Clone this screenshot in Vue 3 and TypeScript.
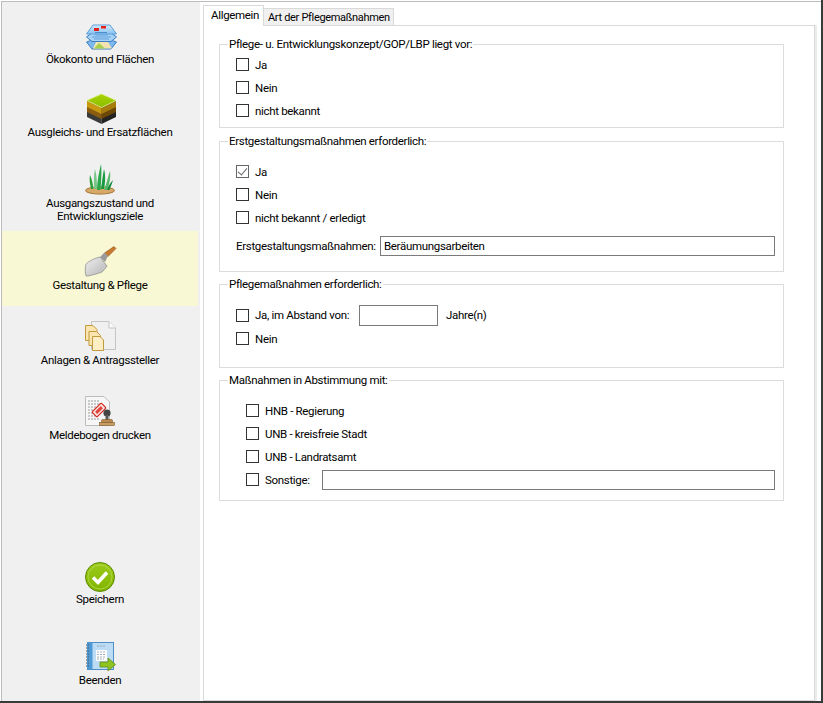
<template>
  <div class="window">
    <aside class="sidebar">
      <nav class="nav">
        <a class="nav-item first">
          <svg class="icon" viewBox="0 0 32 32">
            <polygon points="2.5,22 8,20 27,20 32.5,22 27,29 8,29" fill="#7db9ee" stroke="#3c7fc0" />
            <polygon points="9,28.5 12,22 24,22 28,28.5" fill="#f3e3b0" />
            <polygon points="10,28.5 15,23 21,28.5" fill="#a8d04c" />
            <polygon points="2.5,17 8,13 27,13 32.5,17 27,21.5 8,21.5" fill="#a8d3f7" stroke="#3c7fc0" />
            <path d="M8 17h19M11 15h13M10 19h15" stroke="#4f94d6" fill="none" stroke-width="0.8" />
            <polygon points="2.5,14 9,5 26,5 32.5,14" fill="url(#layerBlue)" stroke="#5d9fdb" />
            <rect x="10" y="8" width="5" height="3" fill="#e3201b" />
            <rect x="17" y="6" width="5" height="2.5" fill="#e3201b" />
            <path d="M11 12.5h12" stroke="#3c7fc0" stroke-width="0.8" />
            <defs>
              <linearGradient id="layerBlue" x1="0" y1="0" x2="0" y2="1">
                <stop offset="0" stop-color="#d6ecfc" />
                <stop offset="1" stop-color="#86c1f1" />
              </linearGradient>
            </defs>
          </svg>
          <span class="nav-label">Ökokonto und Flächen</span>
        </a>

        <a class="nav-item second">
          <svg class="icon" viewBox="0 0 32 32">
            <polygon points="3,8 17.5,15 17.5,31 3,24" fill="#3a3a38" />
            <polygon points="32,8 17.5,15 17.5,31 32,24" fill="#232321" />
            <polygon points="3,8 17.5,15 17.5,26 3,19" fill="#8a5c10" />
            <polygon points="32,8 17.5,15 17.5,26 32,19" fill="#6d4708" />
            <polygon points="3,8 17.5,15 17.5,21 3,14" fill="#c89a12" />
            <polygon points="32,8 17.5,15 17.5,21 32,14" fill="#a67c0c" />
            <polygon points="17.5,1 32,7.5 17.5,14.5 3,7.5" fill="url(#grassTop)" stroke="#d8ee80" stroke-width="0.8" />
            <defs>
              <linearGradient id="grassTop" x1="0" y1="0" x2="0" y2="1">
                <stop offset="0" stop-color="#a8d400" />
                <stop offset="1" stop-color="#8cbc00" />
              </linearGradient>
            </defs>
          </svg>
          <span class="nav-label">Ausgleichs- und Ersatzflächen</span>
        </a>

        <a class="nav-item third">
          <svg class="icon" viewBox="0 0 32 32">
            <ellipse cx="16" cy="26.5" rx="14.5" ry="3.6" fill="#d8a868" stroke="#a57838" />
            <path d="M7 25C6 20 5 15 6 11 8 15 9 21 9.5 25Z" fill="#2f9e3a" />
            <path d="M10 25C10 18 9.5 11 11 5 13 12 13 19 13 25Z" fill="#7cc58a" />
            <path d="M13 26C13 18 15 8 17 0 18 9 17 19 16.5 26Z" fill="#2aa748" />
            <path d="M17 25C18 18 19 10 20 5 22 12 21 20 20 25Z" fill="#159a3e" />
            <path d="M20 26C22 21 24 13 26 7 27 14 25 22 23 26Z" fill="#56b868" />
            <path d="M23 26C24 23 26 19 29 16 28 20 26 24 25.5 26Z" fill="#0f8a36" />
          </svg>
          <span class="nav-label">Ausgangszustand und<br />Entwicklungsziele</span>
        </a>

        <a class="nav-item active">
          <svg class="icon" viewBox="0 0 32 32">
            <path d="M20.5 8 30 1.5 32 3.5 24 11.5Z" fill="#c97a30" stroke="#8f5418" stroke-width="0.6" />
            <path d="M16 12 20.5 7.5 24 11 21 17Z" fill="#9a9a9a" />
            <path d="M2 19C5 16 11 13 16 12L23 21C21 24 19 26 18 27 13 29 8 30 4 31L2 31C1 27 1 23 2 19Z" fill="url(#blade)" stroke="#8a8a8a" stroke-width="0.7" />
            <defs>
              <linearGradient id="blade" x1="0" y1="0" x2="1" y2="1">
                <stop offset="0" stop-color="#f0f0f0" />
                <stop offset="1" stop-color="#b4b4b4" />
              </linearGradient>
            </defs>
          </svg>
          <span class="nav-label">Gestaltung &amp; Pflege</span>
        </a>

        <a class="nav-item">
          <svg class="icon" viewBox="0 0 32 32">
            <path d="M7.5 1.5H25L31.5 8V29.5H7.5Z" fill="#f0f0f0" stroke="#c4c4c4" />
            <path d="M25 1.5V8H31.5" fill="#fafafa" stroke="#c4c4c4" />
            <path d="M1.5 5.5H9L13 9.5V20.5H1.5Z" fill="#fae5ae" stroke="#c19a3e" />
            <path d="M5 11.5H12.5L16.5 15.5V25.5H5Z" fill="#fae5ae" stroke="#c19a3e" />
            <path d="M8.5 16.5H16L19.5 20V30.5H8.5Z" fill="#fdeec4" stroke="#c19a3e" />
          </svg>
          <span class="nav-label">Anlagen &amp; Antragssteller</span>
        </a>

        <a class="nav-item">
          <svg class="icon" viewBox="0 0 32 32">
            <path d="M1.5 1.5H20L25.5 7V30.5H1.5Z" fill="#f7f7f7" stroke="#bdbdbd" />
            <path d="M4 6h12M4 9h14M4 12h8M4 15h7M4 18h6M4 21h7M4 24h11" stroke="#9a9a9a" stroke-dasharray="2 1" fill="none" />
            <g transform="rotate(-45 15 15)">
              <rect x="8.5" y="11.5" width="13" height="7" rx="1" fill="#fbe3e0" stroke="#d3241c" stroke-width="1.2" />
              <rect x="11" y="13.5" width="8" height="3" fill="#e0453c" />
            </g>
            <circle cx="23" cy="18" r="3.6" fill="#444" />
            <rect x="21.5" y="20" width="3" height="6" fill="#5a5a5a" />
            <rect x="17.5" y="24.5" width="11" height="3.5" rx="1" fill="#b88a50" stroke="#7c5a2a" stroke-width="0.6" />
            <rect x="15.5" y="27.5" width="15" height="3" fill="#c99d62" stroke="#7c5a2a" stroke-width="0.6" />
          </svg>
          <span class="nav-label">Meldebogen drucken</span>
        </a>
      </nav>

      <div class="nav-bottom">
        <a class="nav-item short">
          <svg class="icon" viewBox="0 0 32 32">
            <circle cx="16" cy="16" r="14.5" fill="url(#okGreen)" stroke="#5e8c00" />
            <circle cx="16" cy="16" r="12" fill="none" stroke="#b7dc52" stroke-width="0.8" />
            <path d="M9 16.5 14 21.5 23 11.5" fill="none" stroke="#fff" stroke-width="3.6" />
            <defs>
              <linearGradient id="okGreen" x1="0" y1="0" x2="0" y2="1">
                <stop offset="0" stop-color="#9ccb1a" />
                <stop offset="1" stop-color="#80b400" />
              </linearGradient>
            </defs>
          </svg>
          <span class="nav-label">Speichern</span>
        </a>
        <a class="nav-item short">
          <svg class="icon" viewBox="0 0 32 32">
            <rect x="3.5" y="1.5" width="26" height="27" fill="#bcdcf6" stroke="#4d8fc6" />
            <rect x="3.5" y="1.5" width="5" height="27" fill="#4d9ad6" />
            <path d="M2 4h3M2 7h3M2 10h3M2 13h3M2 16h3M2 19h3M2 22h3M2 25h3" stroke="#555" stroke-dasharray="1 1" fill="none" />
            <rect x="12" y="9" width="11" height="11" fill="#fff" />
            <path d="M13 11h9M13 13.5h9M13 16h9M13 18h7M13 5h9" stroke="#8a9aa8" fill="none" stroke-width="0.8" stroke-dasharray="2 1" />
            <path d="M16 21H24V17L31.5 23.5 24 30V26H16Z" fill="#8fc31f" stroke="#5f8a10" stroke-width="0.8" />
          </svg>
          <span class="nav-label">Beenden</span>
        </a>
      </div>
    </aside>

    <main class="main">
      <div class="tabs">
        <div class="tab selected">Allgemein</div>
        <div class="tab">Art der Pflegemaßnahmen</div>
      </div>
      <section class="pane">
        <fieldset class="group g1">
          <legend>Pflege- u. Entwicklungskonzept/GOP/LBP liegt vor:</legend>
          <label v-for="o in plan" :key="o" class="check"><input type="checkbox" /><span>{{ o }}</span></label>
        </fieldset>

        <fieldset class="group g2">
          <legend>Erstgestaltungsmaßnahmen erforderlich:</legend>
          <label class="check"><input type="checkbox" checked /><span>Ja</span></label>
          <label class="check"><input type="checkbox" /><span>Nein</span></label>
          <label class="check"><input type="checkbox" /><span>nicht bekannt / erledigt</span></label>
          <div class="field-row">
            <span class="field-label">Erstgestaltungsmaßnahmen:</span>
            <input class="text" type="text" value="Beräumungsarbeiten" />
          </div>
        </fieldset>

        <fieldset class="group g3">
          <legend>Pflegemaßnahmen erforderlich:</legend>
          <div class="interval">
            <label class="check"><input type="checkbox" /><span>Ja, im Abstand von:</span></label>
            <input class="text years" type="text" />
            <span class="unit">Jahre(n)</span>
          </div>
          <label class="check"><input type="checkbox" /><span>Nein</span></label>
        </fieldset>

        <fieldset class="group g4">
          <legend>Maßnahmen in Abstimmung mit:</legend>
          <label v-for="o in agencies" :key="o" class="check"><input type="checkbox" /><span>{{ o }}</span></label>
          <div class="other">
            <label class="check"><input type="checkbox" /><span>Sonstige:</span></label>
            <input class="text" type="text" />
          </div>
        </fieldset>
      </section>
    </main>
  </div>
</template>

<script setup lang="ts">
const plan: string[] = ["Ja", "Nein", "nicht bekannt"];
const agencies: string[] = ["HNB - Regierung", "UNB - kreisfreie Stadt", "UNB - Landratsamt"];
</script>

<style>
html,
body {
  margin: 0;
  background: #fff;
}
</style>

<style scoped>
.window {
  box-sizing: border-box;
  width: 823px;
  height: 703px;
  display: flex;
  background: #fff;
  border-right: 2px solid #3a3a3a;
  border-bottom: 2px solid #3a3a3a;
  font-family: Roboto, "Liberation Sans", sans-serif;
  font-size: 11.5px;
  letter-spacing: -0.32px;
  color: #000;
  overflow: hidden;
}

.sidebar {
  box-sizing: border-box;
  width: 199px;
  margin: 1px 0 0 1px;
  display: flex;
  flex-direction: column;
  background: #f0f0f0;
  border-top: 1px solid #bcbcbc;
  border-left: 1px solid #bcbcbc;
  padding-top: 4px;
}

.nav-item {
  box-sizing: border-box;
  width: 196px;
  height: 75px;
  padding-top: 14px;
  display: flex;
  flex-direction: column;
  align-items: center;
  text-align: center;
  line-height: 13px;
}

.nav-item.active {
  background: #f8f8d5;
}

.nav-item.first .nav-label {
  padding-top: 1px;
}

.nav-item.second {
  padding-top: 12px;
}

.nav-item.second .nav-label {
  padding-top: 1px;
}

.nav-item.third {
  padding-top: 8px;
}

.nav-item.third .nav-label {
  padding-top: 1px;
}

.nav-item.short {
  height: 80px;
}

.nav-item.short:last-child {
  height: 74px;
}

.icon {
  width: 32px;
  height: 32px;
  flex: none;
  overflow: visible;
}

.nav-label {
  padding-top: 2px;
}

.nav-item.short:first-child .nav-label {
  padding-top: 0;
}

.nav-item.short:last-child .nav-label {
  padding-top: 1px;
}

.nav-bottom {
  margin-top: auto;
}

.main {
  flex: 1;
  min-width: 0;
  box-sizing: border-box;
  margin-top: 1px;
  padding: 3px 6px 0 3px;
  border-top: 1px solid #bcbcbc;
  display: flex;
  flex-direction: column;
}

.tabs {
  display: flex;
  align-items: flex-end;
  height: 21px;
  flex: none;
  margin-bottom: -1px;
  position: relative;
  z-index: 1;
}

.tab {
  box-sizing: border-box;
  width: 130px;
  height: 18px;
  padding: 0 4px;
  background: #f0f0f0;
  border: 1px solid #d9d9d9;
  border-left: 0;
  font-size: 11px;
  line-height: 17px;
  white-space: nowrap;
}

.tab.selected {
  height: 21px;
  width: 61px;
  padding: 0 7px;
  background: #fff;
  border-left: 1px solid #d9d9d9;
  border-bottom: 0;
  font-size: 11.5px;
  line-height: 18px;
}

.pane {
  flex: 1;
  box-sizing: border-box;
  padding: 11px 30px 0 15px;
  border: 1px solid #d9d9d9;
  box-shadow: 2px 0 0 #ececec;
}

.group {
  --inset: 16px;
  box-sizing: border-box;
  margin: 0 0 5px;
  min-width: 0;
  border: 1px solid #dcdcdc;
  padding: 0 8px 0 var(--inset);
}

.group legend {
  margin-left: calc(8px - var(--inset));
  padding: 0 1px;
  line-height: 15px;
}

.g1 {
  height: 91px;
  margin-bottom: 6px;
  padding-top: 1px;
}

.g2 {
  height: 138px;
  padding-top: 11px;
}

.g3 {
  height: 91px;
  padding-top: 11px;
}

.g4 {
  --inset: 26px;
  height: 128px;
  padding-top: 11px;
}

.check {
  display: flex;
  align-items: center;
  gap: 6px;
  height: 23px;
}

.check input {
  appearance: none;
  box-sizing: border-box;
  width: 13px;
  height: 13px;
  margin: 0;
  background: #fff;
  border: 1px solid #333;
  position: relative;
  flex: none;
}

.check input:checked {
  border-color: #666;
}

.check input:checked::after {
  content: "";
  position: absolute;
  left: 3px;
  top: 0;
  width: 4px;
  height: 8px;
  border: solid #666;
  border-width: 0 1.5px 1.5px 0;
  transform: rotate(40deg);
}

.text {
  box-sizing: border-box;
  height: 20px;
  padding: 0 3px;
  border: 1px solid #7a7a7a;
  background: #fff;
  font: inherit;
  letter-spacing: inherit;
  color: #000;
  outline: none;
}

.field-row {
  display: flex;
  align-items: center;
  margin-top: 7px;
}

.field-label {
  width: 144px;
  flex: none;
}

.field-row .text,
.other .text {
  flex: 1;
  min-width: 0;
}

.interval {
  display: flex;
  align-items: center;
  height: 24px;
}

.interval .check {
  width: 123px;
  flex: none;
}

.years {
  width: 79px;
  height: 21px;
}

.unit {
  margin-left: 8px;
}

.other {
  display: flex;
  align-items: center;
}

.other .check {
  width: 76px;
  flex: none;
}
</style>
